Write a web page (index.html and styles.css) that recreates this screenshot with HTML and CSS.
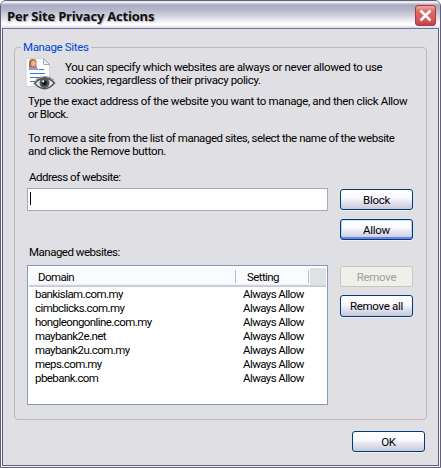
FILE: index.html
```html
<!DOCTYPE html>
<html lang="en">
<head>
<meta charset="utf-8">
<title>Per Site Privacy Actions</title>
<link rel="stylesheet" href="styles.css">
</head>
<body>
<div class="window">
  <header class="titlebar">
    <h1>Per Site Privacy Actions</h1>
    <button class="close" aria-label="Close">
      <svg width="13" height="13" viewBox="0 0 13 13"><path d="M1.500 1.500l10 10M11.500 1.500l-10 10" stroke="#fff" stroke-width="2.500"/></svg>
    </button>
  </header>
  <main class="body">
    <section class="group">
      <h2 class="legend"><span>Manage Sites</span></h2>
      <div class="intro">
        <svg class="icon" width="32" height="34" viewBox="0 0 32 34">
          <path d="M1 1.500h17.500l6 6v22H1z" fill="#fdfdfe" stroke="#d0d0d6"/>
          <path d="M18.500 1.500v6h6z" fill="#f0f0f2" stroke="#aaaab0"/>
          <path d="M4 13V5q0-3 4-3t3.500 4v4l2 3z" fill="#a7714d"/>
          <ellipse cx="8.500" cy="6.500" rx="2.300" ry="3" fill="#edb58b"/>
          <path d="M3.500 13q0-3 3-3l2 1 2-1q2 0 2 3z" fill="#a391df"/>
          <path d="M14 12.500h5M5 16.500h15M5 20.500h10M5 24.500h5" stroke="#3c78bd" stroke-width="1.200"/>
          <path d="M9.500 26.500q9.500-11 20-.5Q20 37 9.500 26.500z" fill="#e9e9e9" stroke="#555" stroke-width="1.600"/>
          <path d="M10.500 23q9-7 18.500 0" fill="none" stroke="#888" stroke-width="1"/>
          <circle cx="19.500" cy="26" r="5" fill="#505656"/>
          <circle cx="19.500" cy="26" r="2.500" fill="#171919"/>
          <circle cx="18.200" cy="24.300" r="1.100" fill="#fff"/>
        </svg>
        <p><span class="l1">You can specify which websites are always or never allowed to use</span><span class="l2">cookies, regardless of their privacy policy.</span></p>
      </div>
      <p class="para"><span class="l3">Type the exact address of the website you want to manage, and then click Allow</span><span class="l4">or Block.</span></p>
      <p class="para"><span class="l5">To remove a site from the list of managed sites, select the name of the website</span><span class="l6">and click the Remove button.</span></p>
      <div class="columns">
        <div class="left">
          <label>Address of website:</label>
          <div class="field"><i class="caret"></i></div>
          <label>Managed websites:</label>
          <div class="list">
            <div class="head"><span class="c1">Domain</span><span class="c2">Setting</span><span class="c3"></span></div>
            <div class="row"><span>bankislam.com.my</span><span>Always Allow</span></div>
            <div class="row"><span>cimbclicks.com.my</span><span>Always Allow</span></div>
            <div class="row"><span>hongleongonline.com.my</span><span>Always Allow</span></div>
            <div class="row"><span>maybank2e.net</span><span>Always Allow</span></div>
            <div class="row"><span>maybank2u.com.my</span><span>Always Allow</span></div>
            <div class="row"><span>meps.com.my</span><span>Always Allow</span></div>
            <div class="row"><span>pbebank.com</span><span>Always Allow</span></div>
          </div>
        </div>
        <div class="actions">
          <button class="btn">Block</button>
          <button class="btn default">Allow</button>
          <button class="btn off" disabled>Remove</button>
          <button class="btn all">Remove all</button>
        </div>
      </div>
    </section>
    <footer><button class="btn">OK</button></footer>
  </main>
</div>
</body>
</html>
```
FILE: styles.css
```css
* { box-sizing: border-box; margin: 0; padding: 0; }
body { width: 441px; height: 468px; overflow: hidden; background: #fff; font: 11.5px/13px Roboto, "Liberation Sans", sans-serif; letter-spacing: -.35px; color: #000; }
.window { width: 441px; height: 468px; border: 1px solid #626078; border-radius: 6px 6px 0 0; background: #e0dfe3; box-shadow: inset 1px 0 #f4f4fa, inset -1px 0 #f4f4fa, inset 0 -1px #f4f4fa; overflow: hidden; }
.titlebar { height: 27px; display: flex; justify-content: space-between; align-items: flex-start; padding: 4px 4px 0 6px; background: linear-gradient(#d2d2df 0, #fff 1px, #d7d7e3 2px, #a9a9c2 4px, #b7b7cb 9px, #dedee8 17px, #fbfbfd 22px, #fff 24px, #d7d7e0 27px); }
h1 { font: bold 13px/22px "Open Sans", sans-serif; white-space: nowrap; letter-spacing: -.2px; color: #111; text-shadow: 1px 1px 1px #8888a099; }
.close { width: 21px; height: 21px; border: 1px solid #a53b45; border-radius: 3px; background: linear-gradient(#f0a79b, #dc6a65 30%, #d95454 75%, #b9434c); display: flex; align-items: center; justify-content: center; }
.body { height: 438px; margin: 0 1px; border: 1px solid #626078; border-color: #7573a0 #626078 #626078; padding: 18px 11px 0 11px; }
.group { width: 413px; height: 373px; border: 1px solid #bfb8bf; border-radius: 4px; padding: 0 0 0 12px; }
.legend { height: 13px; margin: -7px 0 0 -6px; font-weight: 400; font-size: inherit; color: #0046d5; display: flex; }
.legend span { background: #e0dfe3; padding: 0 2px; }
p span { display: block; white-space: nowrap; }
.intro { display: flex; height: 41px; padding-top: 3px; }
.icon { width: 32px; height: 34px; flex: none; margin: 0 6px 0 -2px; }
.intro p { padding: 4px 0 0 2px; }
.para { height: 37px; padding-left: 1px; }
.l2 { letter-spacing: -.38px; }
.l4 { letter-spacing: -.5px; }
.l5 { letter-spacing: -.45px; }
.l6 { letter-spacing: -.35px; }
.columns { display: flex; gap: 12px; padding-top: 1px; }
.left { width: 301px; display: flex; flex-direction: column; }
label { padding: 1px 0 0 2px; height: 13px; white-space: nowrap; letter-spacing: -.5px; }
.field { height: 23px; margin: 5px 0 34px; border: 1px solid #a3abb8; background: #fff; padding: 3px 2px; }
.caret { display: block; width: 1px; height: 13px; background: #000; }
.list { height: 140px; margin-top: 7px; border: 1px solid #7f9db9; background: #fff; padding: 1px; }
.head { height: 20px; background: linear-gradient(#fafbff 0 17px, #e4e4ee 18px, #c0c0d0 19px, #d0d0de); display: flex; line-height: 21px; letter-spacing: -.6px; }
.c1 { width: 207px; padding-left: 9px; }
.c2 { width: 73px; padding-left: 11px; }
.c1, .c2 { background: linear-gradient(#b9b9cc, #b9b9cc) right 3px / 1px 13px no-repeat; }
.c3 { flex: 1; height: 17px; margin: 1px 0 0 1px; background: #dfe2e3; }
.row { height: 14px; display: flex; line-height: 14px; padding-left: 6px; white-space: nowrap; letter-spacing: -.57px; }
.row span:first-child { width: 208px; }
.actions { padding-top: 19px; display: flex; flex-direction: column; }
.btn { width: 73px; height: 21px; font: 11.5px/18px Roboto, sans-serif; letter-spacing: -.3px; color: #000; border: 1px solid #003c74; border-radius: 3px; background: linear-gradient(#fff 0, #fafaff 40%, #e2e2ef 65%, #c8c8dc); box-shadow: 0 1px #f0f0f3; text-align: center; white-space: nowrap; }
.default { margin: 9px 0 26px; box-shadow: inset 0 1px #cee7ff, inset 0 -2px #6982ee, inset 1px 0 #bcd4f6, inset -1px 0 #bcd4f6, 0 1px #f0f0f3; }
.off { color: #a1a192; background: #f0f0eb; border-color: #c9c7ba; box-shadow: none; }
.all { margin-top: 8px; height: 22px; }
footer { display: flex; justify-content: flex-end; padding: 11px 2px 0 0; }
```
